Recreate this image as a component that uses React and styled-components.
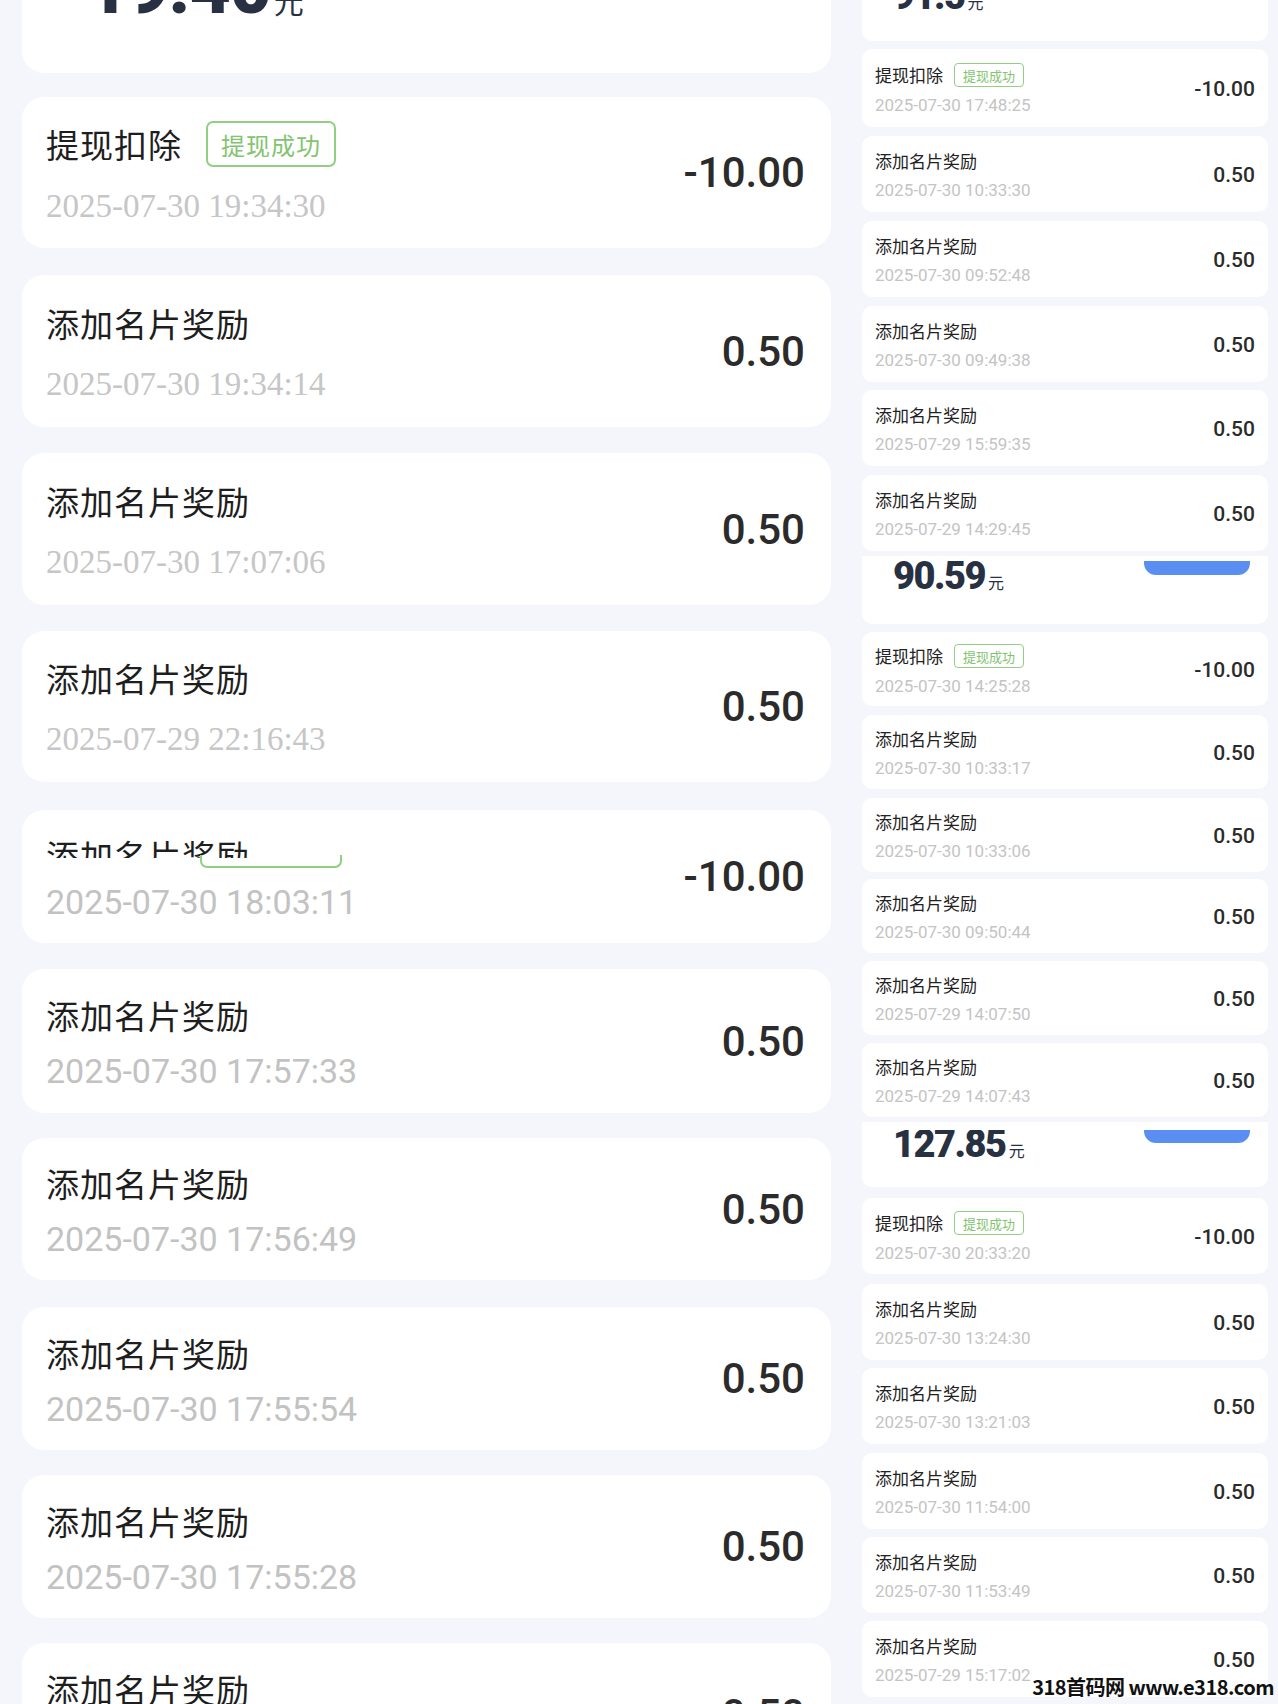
import React from "react";
import styled, { createGlobalStyle } from "styled-components";

const GlobalStyle = createGlobalStyle`
  html, body {
    margin: 0;
    padding: 0;
    background: #f4f6fb;
  }
  body {
    font-family: Roboto, "Noto Sans CJK SC", sans-serif;
  }
`;

const leftRecords = [
  { mt: 24, h: 151, title: "提现扣除", badge: true, date: "2025-07-30 19:34:30", amount: "-10.00", serif: true },
  { mt: 27, h: 152, title: "添加名片奖励", date: "2025-07-30 19:34:14", amount: "0.50", serif: true },
  { mt: 26, h: 152, title: "添加名片奖励", date: "2025-07-30 17:07:06", amount: "0.50", serif: true },
  { mt: 26, h: 151, title: "添加名片奖励", date: "2025-07-29 22:16:43", amount: "0.50", serif: true },
  { mt: 28, h: 133, title: "添加名片奖励", glitch: true, date: "2025-07-30 18:03:11", amount: "-10.00" },
  { mt: 26, h: 144, title: "添加名片奖励", date: "2025-07-30 17:57:33", amount: "0.50" },
  { mt: 25, h: 142, title: "添加名片奖励", date: "2025-07-30 17:56:49", amount: "0.50" },
  { mt: 27, h: 143, title: "添加名片奖励", date: "2025-07-30 17:55:54", amount: "0.50" },
  { mt: 25, h: 143, title: "添加名片奖励", date: "2025-07-30 17:55:28", amount: "0.50" },
  { mt: 25, h: 143, title: "添加名片奖励", date: "2025-07-30 17:54:51", amount: "0.50" },
];

// right column is three stitched screenshots, each starting with a cut balance card
const rightGroups = [
  {
    balance: { mt: 0, h: 41, pad: 0, shift: -23, amount: "91.5" },
    items: [
      { mt: 8, h: 78, title: "提现扣除", badge: true, date: "2025-07-30 17:48:25", amount: "-10.00" },
      { mt: 9, h: 76, title: "添加名片奖励", date: "2025-07-30 10:33:30", amount: "0.50" },
      { mt: 9, h: 76, title: "添加名片奖励", date: "2025-07-30 09:52:48", amount: "0.50" },
      { mt: 9, h: 76, title: "添加名片奖励", date: "2025-07-30 09:49:38", amount: "0.50" },
      { mt: 8, h: 76, title: "添加名片奖励", date: "2025-07-29 15:59:35", amount: "0.50" },
      { mt: 9, h: 76, title: "添加名片奖励", date: "2025-07-29 14:29:45", amount: "0.50" },
    ],
  },
  {
    balance: { mt: 5, h: 68, pad: 5, shift: -4, amount: "90.59" },
    items: [
      { mt: 8, h: 74, title: "提现扣除", badge: true, date: "2025-07-30 14:25:28", amount: "-10.00" },
      { mt: 9, h: 74, title: "添加名片奖励", date: "2025-07-30 10:33:17", amount: "0.50" },
      { mt: 9, h: 74, title: "添加名片奖励", date: "2025-07-30 10:33:06", amount: "0.50" },
      { mt: 7, h: 74, title: "添加名片奖励", date: "2025-07-30 09:50:44", amount: "0.50" },
      { mt: 8, h: 74, title: "添加名片奖励", date: "2025-07-29 14:07:50", amount: "0.50" },
      { mt: 8, h: 74, title: "添加名片奖励", date: "2025-07-29 14:07:43", amount: "0.50" },
    ],
  },
  {
    balance: { mt: 5, h: 65, pad: 8, shift: -5, amount: "127.85" },
    items: [
      { mt: 11, h: 76, title: "提现扣除", badge: true, date: "2025-07-30 20:33:20", amount: "-10.00" },
      { mt: 10, h: 76, title: "添加名片奖励", date: "2025-07-30 13:24:30", amount: "0.50" },
      { mt: 8, h: 76, title: "添加名片奖励", date: "2025-07-30 13:21:03", amount: "0.50" },
      { mt: 9, h: 76, title: "添加名片奖励", date: "2025-07-30 11:54:00", amount: "0.50" },
      { mt: 8, h: 76, title: "添加名片奖励", date: "2025-07-30 11:53:49", amount: "0.50" },
      { mt: 8, h: 76, title: "添加名片奖励", date: "2025-07-29 15:17:02", amount: "0.50" },
    ],
  },
];

function LeftRecord({ r }) {
  return (
    <RecordCard $mt={r.mt} $h={r.h}>
      <InfoBlock $gap={r.serif ? 21 : 16}>
        {r.glitch ? (
          <GlitchRow>
            <GlitchClip>
              <Title>{r.title}</Title>
            </GlitchClip>
            <BadgeStub />
          </GlitchRow>
        ) : (
          <TitleRow>
            <Title>{r.title}</Title>
            {r.badge && <Badge>提现成功</Badge>}
          </TitleRow>
        )}
        <DateText $serif={r.serif}>{r.date}</DateText>
      </InfoBlock>
      <Amount>{r.amount}</Amount>
    </RecordCard>
  );
}

function Balance({ b, big }) {
  return (
    <BalanceCard $mt={b.mt} $h={b.h} $pad={b.pad} $big={big}>
      <BalanceClip>
        <BalanceRow $shift={b.shift}>
          <BigNumber $big={big}>
            {b.amount}
            <Yuan $big={big}>元</Yuan>
          </BigNumber>
          {!big && <BlueBar />}
        </BalanceRow>
      </BalanceClip>
    </BalanceCard>
  );
}

export default function App() {
  return (
    <>
      <GlobalStyle />
      <Page>
        <LeftColumn>
          <Balance big b={{ mt: 0, h: 73, pad: 0, shift: -47, amount: "19.40" }} />
          {leftRecords.map((r, i) => (
            <LeftRecord key={i} r={r} />
          ))}
        </LeftColumn>
        <RightColumn>
          {rightGroups.map((g, gi) => (
            <React.Fragment key={gi}>
              <Balance b={g.balance} />
              {g.items.map((it, i) => (
                <SmallCard key={i} $mt={it.mt} $h={it.h}>
                  <SmallInfo>
                    <SmallTitleRow>
                      <SmallTitle>{it.title}</SmallTitle>
                      {it.badge && <SmallBadge>提现成功</SmallBadge>}
                    </SmallTitleRow>
                    <SmallDate>{it.date}</SmallDate>
                  </SmallInfo>
                  <SmallAmount>{it.amount}</SmallAmount>
                </SmallCard>
              ))}
            </React.Fragment>
          ))}
        </RightColumn>
        <Watermark>318首码网 www.e318.com</Watermark>
      </Page>
    </>
  );
}

const Page = styled.div`
  position: relative;
  display: flex;
  width: 1278px;
  height: 1704px;
  overflow: hidden;
  background: #f4f6fb;
`;

const LeftColumn = styled.div`
  width: 809px;
  margin-left: 22px;
  display: flex;
  flex-direction: column;
  flex-shrink: 0;
`;

const RightColumn = styled.div`
  width: 406px;
  margin-left: 31px;
  display: flex;
  flex-direction: column;
  flex-shrink: 0;
`;

const BalanceCard = styled.div`
  flex-shrink: 0;
  box-sizing: border-box;
  height: ${(p) => p.$h}px;
  margin-top: ${(p) => p.$mt}px;
  padding: ${(p) => p.$pad}px ${(p) => (p.$big ? "30px" : "18px")} 0 ${(p) => (p.$big ? "65px" : "31px")};
  background: #fff;
  border-radius: ${(p) => (p.$big ? "0 0 22px 22px" : "0 0 10px 10px")};
`;

const BalanceClip = styled.div`
  height: 40px;
  overflow: hidden;
`;

const BalanceRow = styled.div`
  display: flex;
  justify-content: space-between;
  align-items: flex-start;
  margin-top: ${(p) => p.$shift}px;
`;

const BigNumber = styled.div`
  font-family: Roboto, "Noto Sans CJK SC", sans-serif;
  font-weight: 900;
  font-size: ${(p) => (p.$big ? "72px" : "38px")};
  letter-spacing: ${(p) => (p.$big ? "-1px" : "-1.5px")};
  line-height: 1;
  color: #283142;
`;

const Yuan = styled.span`
  font-family: "Noto Sans CJK SC", sans-serif;
  font-weight: 400;
  font-size: ${(p) => (p.$big ? "30px" : "16px")};
  letter-spacing: 0;
  margin-left: 3px;
`;

const BlueBar = styled.div`
  width: 106px;
  height: 18px;
  background: #5a8ef0;
  border-radius: 0 0 12px 12px;
`;

const RecordCard = styled.div`
  flex-shrink: 0;
  box-sizing: border-box;
  height: ${(p) => p.$h}px;
  margin-top: ${(p) => p.$mt}px;
  padding: 0 26px 0 24px;
  background: #fff;
  border-radius: 22px;
  display: flex;
  align-items: center;
  justify-content: space-between;
`;

const InfoBlock = styled.div`
  display: flex;
  flex-direction: column;
  gap: ${(p) => p.$gap}px;
`;

const TitleRow = styled.div`
  display: flex;
  align-items: center;
  gap: 24px;
`;

const Title = styled.div`
  font-family: "Noto Sans CJK SC", sans-serif;
  font-size: 33px;
  line-height: 44px;
  color: #1e1e1e;
  letter-spacing: 1px;
  white-space: nowrap;
`;

const Badge = styled.div`
  box-sizing: border-box;
  height: 46px;
  display: flex;
  align-items: center;
  padding: 0 13px;
  border: 2px solid #93cf83;
  border-radius: 7px;
  font-family: "Noto Sans CJK SC", sans-serif;
  font-size: 24px;
  letter-spacing: 1px;
  color: #82c46f;
`;

const GlitchRow = styled.div`
  display: flex;
  align-items: flex-end;
  height: 35px;
`;

const GlitchClip = styled.div`
  height: 25px;
  align-self: flex-start;
  overflow: hidden;
`;

const BadgeStub = styled.div`
  box-sizing: border-box;
  width: 142px;
  height: 13px;
  margin-left: -50px;
  border: 2px solid #93cf83;
  border-top: none;
  border-radius: 0 0 7px 7px;
`;

const DateText = styled.div`
  font-family: ${(p) => (p.$serif ? '"Liberation Serif", serif' : "Roboto, sans-serif")};
  font-size: ${(p) => (p.$serif ? "33px" : "34px")};
  line-height: 36px;
  color: ${(p) => (p.$serif ? "#c6c6c6" : "#c2c2c2")};
`;

const Amount = styled.div`
  font-family: Roboto, sans-serif;
  font-weight: 500;
  font-size: 42px;
  color: #2b2b2b;
`;

const SmallCard = styled.div`
  flex-shrink: 0;
  box-sizing: border-box;
  height: ${(p) => p.$h}px;
  margin-top: ${(p) => p.$mt}px;
  padding: 2px 13px 0 13px;
  background: #fff;
  border-radius: 10px;
  display: flex;
  align-items: center;
  justify-content: space-between;
`;

const SmallInfo = styled.div`
  display: flex;
  flex-direction: column;
  gap: 8px;
`;

const SmallTitleRow = styled.div`
  display: flex;
  align-items: center;
  gap: 11px;
`;

const SmallTitle = styled.div`
  font-family: "Noto Sans CJK SC", sans-serif;
  font-size: 17px;
  line-height: 22px;
  color: #222;
`;

const SmallBadge = styled.div`
  box-sizing: border-box;
  height: 24px;
  display: flex;
  align-items: center;
  padding: 0 8px;
  border: 1px solid #93cf83;
  border-radius: 4px;
  font-family: "Noto Sans CJK SC", sans-serif;
  font-size: 13px;
  color: #82c46f;
`;

const SmallDate = styled.div`
  font-family: Roboto, sans-serif;
  font-size: 17px;
  line-height: 20px;
  color: #c4c4c4;
`;

const SmallAmount = styled.div`
  font-family: Roboto, sans-serif;
  font-weight: 500;
  font-size: 21px;
  color: #2b2b2b;
`;

const Watermark = styled.div`
  position: absolute;
  right: 4px;
  bottom: 4px;
  font-family: "Noto Sans CJK SC", sans-serif;
  font-weight: 700;
  font-size: 20px;
  letter-spacing: -0.5px;
  line-height: 26px;
  color: #111;
`;
